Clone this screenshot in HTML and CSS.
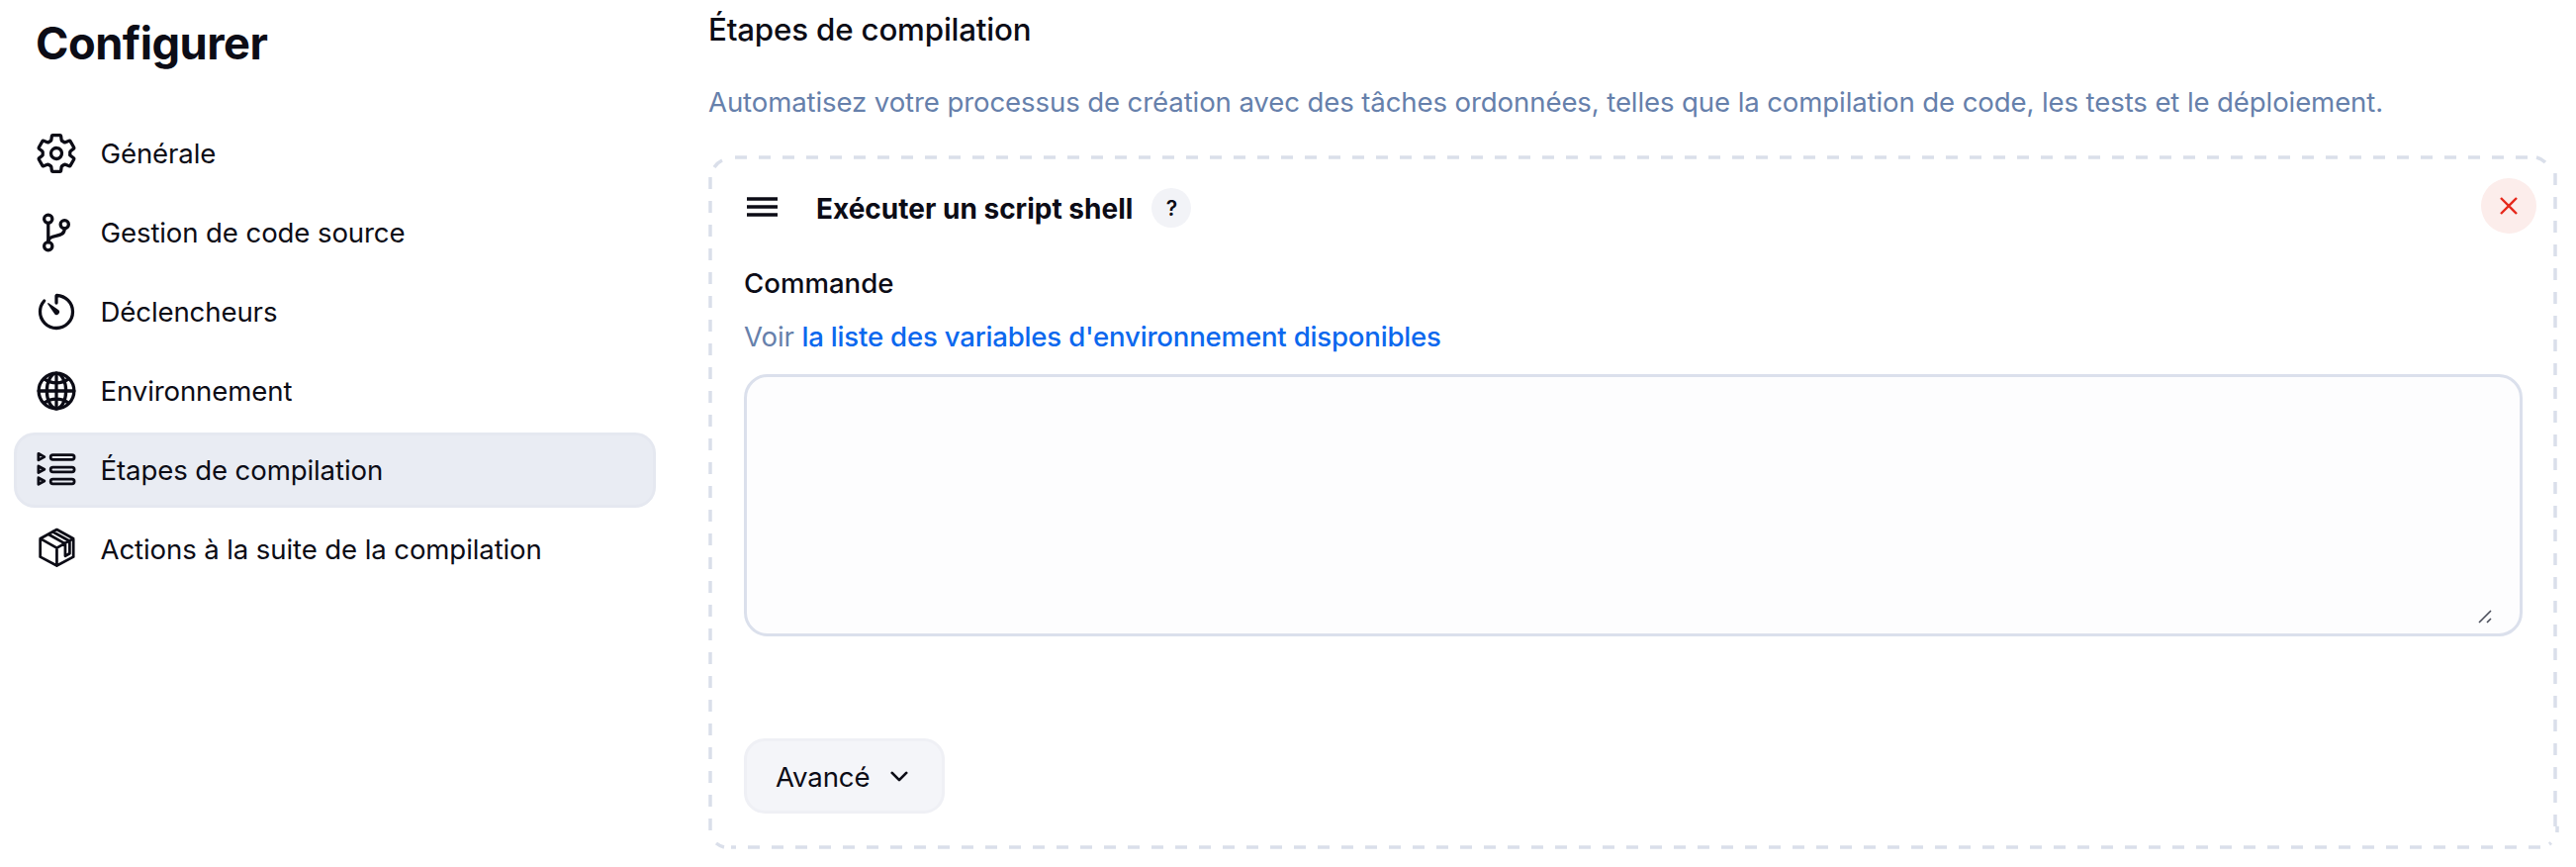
FILE: index.html
```html
<!DOCTYPE html>
<html lang="fr">
<head>
<meta charset="utf-8">
<title>Configurer</title>
<link rel="stylesheet" href="styles.css">
</head>
<body>
<div class="page">
  <aside class="sidebar">
    <h1 class="page-title">Configurer</h1>
    <nav class="nav">
      <a class="nav-item">
        <svg class="icon" viewBox="0 0 512 512"><path d="M262.29 192.31a64 64 0 1057.4 57.4 64.13 64.13 0 00-57.4-57.4zM416.39 256a154.34 154.34 0 01-1.53 20.79l45.21 35.46a10.81 10.81 0 012.45 13.75l-42.77 74a10.81 10.81 0 01-13.14 4.59l-44.9-18.08a16.11 16.11 0 00-15.17 1.75A164.48 164.48 0 01325 400.8a15.94 15.94 0 00-8.82 12.14l-6.73 47.89a11.08 11.08 0 01-10.68 9.17h-85.54a11.11 11.11 0 01-10.69-8.87l-6.72-47.82a16.07 16.07 0 00-9-12.22 155.3 155.3 0 01-21.46-12.57 16 16 0 00-15.11-1.71l-44.89 18.07a10.81 10.81 0 01-13.14-4.58l-42.77-74a10.8 10.8 0 012.45-13.75l38.21-30a16.05 16.05 0 006-14.08c-.36-4.17-.58-8.33-.58-12.5s.21-8.27.58-12.35a16 16 0 00-6.07-13.94l-38.19-30A10.81 10.81 0 0149.48 186l42.77-74a10.81 10.81 0 0113.14-4.59l44.9 18.08a16.11 16.11 0 0015.17-1.75A164.48 164.48 0 01187 111.2a15.94 15.94 0 008.82-12.14l6.73-47.89A11.08 11.08 0 01213.23 42h85.54a11.11 11.11 0 0110.69 8.87l6.72 47.82a16.07 16.07 0 009 12.22 155.3 155.3 0 0121.46 12.57 16 16 0 0015.11 1.71l44.89-18.07a10.81 10.81 0 0113.14 4.58l42.77 74a10.8 10.8 0 01-2.45 13.75l-38.21 30a16.05 16.05 0 00-6.05 14.08c.33 4.14.55 8.3.55 12.47z"/></svg>
        <span>Générale</span>
      </a>
      <a class="nav-item">
        <svg class="icon" viewBox="0 0 512 512"><circle cx="160" cy="96" r="48"/><circle cx="160" cy="416" r="48"/><path d="M160 368V144"/><circle cx="352" cy="160" r="48"/><path d="M352 208c0 128-192 48-192 160"/></svg>
        <span>Gestion de code source</span>
      </a>
      <a class="nav-item">
        <svg class="icon" viewBox="0 0 512 512"><path d="M112.91 128A191.85 191.85 0 0064 254c-1.18 106.35 85.65 193.8 192 194 106.2.2 192-85.83 192-192 0-104.54-83.55-189.61-187.5-192a4.36 4.36 0 00-4.5 4.37V152"/><path class="solid" d="M233.38 278.63l-79-113a8.13 8.13 0 0111.32-11.32l113 79a32.5 32.5 0 01-37 53.34 33.21 33.21 0 01-8.32-8.02z"/></svg>
        <span>Déclencheurs</span>
      </a>
      <a class="nav-item">
        <svg class="icon" viewBox="0 0 512 512"><path d="M256 48C141.13 48 48 141.13 48 256s93.13 208 208 208 208-93.13 208-208S370.87 48 256 48z"/><path d="M256 48c-58.07 0-112.67 92.47-112.67 208S197.93 464 256 464s112.67-92.47 112.67-208S314.07 48 256 48z"/><path d="M117.33 117.33c38.24 27.15 86.38 43.34 138.67 43.34s100.43-16.19 138.67-43.34M394.67 394.67c-38.24-27.15-86.38-43.34-138.67-43.34s-100.43 16.19-138.67 43.34"/><path d="M256 48v416M464 256H48"/></svg>
        <span>Environnement</span>
      </a>
      <a class="nav-item nav-item-active">
        <svg class="icon icon-thin" viewBox="0 0 512 512"><rect x="188" y="78" width="279" height="55" rx="27"/><rect x="188" y="222" width="279" height="55" rx="27"/><rect x="188" y="362" width="279" height="55" rx="27"/><path d="M45 62l70 38-70 38zM45 209l70 38-70 38zM45 346l70 38-70 38z"/></svg>
        <span>Étapes de compilation</span>
      </a>
      <a class="nav-item">
        <svg class="icon icon-thin" viewBox="0 0 512 512"><path d="M261 24l195 106v215L261 448 66 345V130zM66 130l195 110 195-110M261 240v208M160 78l200 112v145l52-29V160L212 50"/></svg>
        <span>Actions à la suite de la compilation</span>
      </a>
    </nav>
  </aside>
  <main class="main">
    <h2 class="section-title">Étapes de compilation</h2>
    <p class="section-desc">Automatisez votre processus de création avec des tâches ordonnées, telles que la compilation de code, les tests et le déploiement.</p>
    <section class="step-card">
      <svg class="card-outline" width="1871" height="701" viewBox="0 0 1871 701"><path d="M27 2H1849M1867 18V683M1852 699H23M2 682V20"/><path d="M6 12A20 20 0 0 1 14 5M1848 2A20 20 0 0 1 1857 7M1869 684V678A20 20 0 0 1 1861 696M8 695A20 20 0 0 0 16 699"/></svg>
      <header class="step-header">
        <div class="step-heading">
          <svg class="grip" viewBox="0 0 32 24"><path d="M0 4H31M0 12H31M0 20H31"/></svg>
          <h3 class="step-title">Exécuter un script shell</h3>
          <span class="help-chip">?</span>
        </div>
        <button class="close-btn" type="button" aria-label="Supprimer">
          <svg class="close-icon" viewBox="0 0 18 18"><path d="M1 1L17 17M17 1L1 17"/></svg>
        </button>
      </header>
      <label class="field-label">Commande</label>
      <p class="field-hint">Voir <a class="field-link">la liste des variables d'environnement disponibles</a></p>
      <div class="textarea-wrap">
        <textarea class="command"></textarea>
        <svg class="resizer" viewBox="0 0 14 14"><path d="M1 13L13 1M9 13L13 9"/></svg>
      </div>
      <button class="advanced-btn" type="button">
        <span class="advanced-label">Avancé</span>
        <svg class="chevron" viewBox="0 0 20 12"><path d="M2 2L10 10L18 2"/></svg>
      </button>
    </section>
  </main>
</div>
</body>
</html>
```
FILE: styles.css
```css
* { box-sizing: border-box; }
html, body { margin: 0; padding: 0; background: #fff; }
body {
  font-family: Inter, "Liberation Sans", sans-serif;
  font-size: 27.6px;
  letter-spacing: -0.12px;
  color: #0c0c16;
  -webkit-font-smoothing: antialiased;
}
.page { display: flex; align-items: flex-start; width: 2604px; height: 876px; overflow: hidden; }

.sidebar { width: 716px; flex: none; padding: 0 53px 0 14px; }
.page-title {
  margin: 0;
  padding: 14px 0 0 22px;
  height: 117px;
  font-size: 45.24px;
  line-height: 60px;
  font-weight: 700;
  letter-spacing: -0.5px;
}
.nav { display: flex; flex-direction: column; gap: 4px; }
.nav-item {
  display: flex;
  align-items: center;
  gap: 22.5px;
  height: 76px;
  padding-left: 18px;
  border: 3.5px solid transparent;
  border-radius: 21px;
  font-weight: 400;
}
.nav-item-active { background: #e9ecf3; border-color: #e5e8f0; }
.icon {
  width: 44px;
  height: 44px;
  flex: none;
  fill: none;
  stroke: #0c0c16;
  stroke-width: 38;
  stroke-linecap: round;
  stroke-linejoin: round;
}
.icon-thin { stroke-width: 32; }
.icon .solid { fill: #0c0c16; stroke: none; }

.main { flex: 1; min-width: 0; padding-right: 17px; }
.section-title {
  margin: 0;
  padding-top: 10px;
  height: 70px;
  font-size: 31.32px;
  line-height: 40px;
  font-weight: 450;
  letter-spacing: -0.2px;
}
.section-desc {
  margin: 0;
  height: 87px;
  padding: 15px 0 0;
  line-height: 36px;
  color: #6680ab;
  font-weight: 400;
}
.step-card {
  position: relative;
  width: 1871px;
  height: 701px;
  padding: 23px 37px 23px 36px;
}
.card-outline {
  position: absolute;
  inset: 0;
  fill: none;
  stroke: #dadfea;
  stroke-width: 3.5;
  stroke-dasharray: 12 12;
}
.step-header { display: flex; align-items: center; justify-content: space-between; height: 56px; margin-right: -14px; }
.step-heading { display: flex; align-items: center; padding-top: 6px; }
.grip { width: 32px; height: 24px; margin-left: 3px; flex: none; fill: none; stroke: #0c0c16; stroke-width: 3.5; transform: translateY(-2px); }
.step-title { margin: 0 0 0 38px; font-size: 28px; line-height: 40px; font-weight: 700; letter-spacing: 0; }
.help-chip {
  display: flex;
  align-items: center;
  justify-content: center;
  width: 40px;
  height: 40px;
  margin-left: 19px;
  border-radius: 50%;
  background: #f2f3f7;
  font-size: 21px;
  font-weight: 600;
  transform: translateY(-1px);
}
.close-btn {
  display: flex;
  align-items: center;
  justify-content: center;
  width: 56px;
  height: 56px;
  padding: 0;
  border: 0;
  border-radius: 50%;
  background: #fcedeb;
}
.close-icon { width: 18px; height: 18px; fill: none; stroke: #e6291c; stroke-width: 2.4; }

.field-label { display: block; margin-top: 33px; line-height: 34px; font-weight: 450; letter-spacing: 0; }
.field-hint { margin: 20px 0 0; line-height: 34px; color: #6680ab; font-weight: 400; }
.field-link { color: #0b68ee; font-weight: 500; letter-spacing: -0.2px; }
.textarea-wrap { position: relative; height: 265px; margin-top: 21px; }
.command {
  display: block;
  width: 100%;
  height: 100%;
  border: 3.5px solid #dbe0ec;
  border-radius: 24px;
  background: #fdfdfe;
  resize: none;
  outline: none;
}
.resizer {
  position: absolute;
  right: 31px;
  bottom: 13px;
  width: 14px;
  height: 14px;
  fill: none;
  stroke: #4a4d5a;
  stroke-width: 1.6;
}
.advanced-btn {
  display: flex;
  align-items: center;
  gap: 21px;
  width: 203px;
  height: 76px;
  margin-top: 103px;
  padding: 0 0 0 29px;
  border: 3.5px solid #eff0f5;
  border-radius: 21px;
  background: #f4f5f9;
  color: #0c0c16;
  font-family: inherit;
  font-size: 27.6px;
  letter-spacing: -0.12px;
  font-weight: 400;
}
.advanced-label { padding-top: 2px; }
.chevron { width: 18px; height: 11px; fill: none; stroke: #0c0c16; stroke-width: 3; stroke-linecap: round; stroke-linejoin: round; }
```
